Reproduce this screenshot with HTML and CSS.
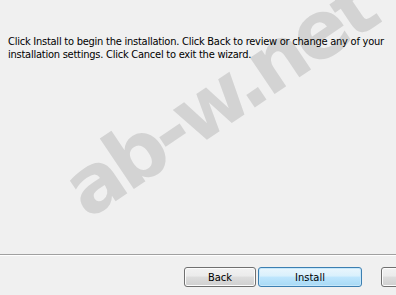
FILE: index.html
```html
<!DOCTYPE html>
<html>
<head>
<meta charset="utf-8">
<link rel="stylesheet" href="styles.css">
</head>
<body>
<div class="dialog">
  <div class="watermark">ab-w.net</div>
  <div class="main">
    <p class="desc">Click Install to begin the installation. Click Back to review or change any of your installation settings. Click Cancel to exit the wizard.</p>
  </div>
  <div class="footer">
    <button class="btn back">Back</button>
    <button class="btn install">Install</button>
    <button class="btn cancel">Cancel</button>
  </div>
</div>
</body>
</html>
```
FILE: styles.css
```css
html, body {
  margin: 0;
  padding: 0;
  background: #f0f0f0;
  overflow: hidden;
}
.dialog {
  position: relative;
  width: 396px;
  height: 295px;
  overflow: hidden;
  display: flex;
  flex-direction: column;
  font-family: "DejaVu Sans Condensed", "DejaVu Sans", sans-serif;
  font-stretch: condensed;
  font-size: 11px;
  color: #000;
}
.watermark {
  position: absolute;
  left: 219px;
  top: 99px;
  transform: translate(-50%, -50%) rotate(-34deg);
  font-family: "DejaVu Sans", Verdana, sans-serif;
  font-weight: bold;
  font-stretch: normal;
  font-size: 80px;
  letter-spacing: -5px;
  line-height: 1;
  color: #d3d3d3;
  white-space: nowrap;
  z-index: 0;
}
.main {
  position: relative;
  z-index: 1;
  flex: 1;
}
.desc {
  margin: 35px 0 0 8px;
  width: 386px;
  line-height: 13px;
  letter-spacing: -0.24px;
}
.footer {
  position: relative;
  z-index: 1;
  height: 41px;
  border-top: 1px solid #a0a0a0;
  box-shadow: inset 0 1px 0 #ffffff;
  display: flex;
  align-items: flex-start;
  padding: 12px 0 0 184px;
  box-sizing: border-box;
  overflow: hidden;
}
.btn {
  flex: none;
  height: 20px;
  margin: 0;
  padding: 0;
  border: 1px solid #707070;
  border-radius: 3px;
  background: linear-gradient(#f2f2f2 0%, #ebebeb 45%, #dddddd 50%, #cfcfcf 100%);
  font-family: "DejaVu Sans Condensed", "DejaVu Sans", sans-serif;
  font-stretch: condensed;
  font-size: 11px;
  color: #000;
  box-shadow: inset 0 0 0 1px #fcfcfc;
}
.back {
  width: 72px;
}
.install {
  width: 104px;
  margin-left: 2px;
  border-color: #3c7fb1;
  background: linear-gradient(#eaf6fd 0%, #d9f0fc 45%, #bee6fd 50%, #a7d9f5 100%);
  box-shadow: inset 0 0 0 1px #c6e7fa;
}
.cancel {
  width: 72px;
  margin-left: 19px;
}
```
